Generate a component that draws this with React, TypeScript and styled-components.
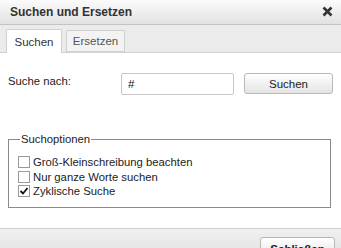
import React from "react";
import styled, { createGlobalStyle } from "styled-components";

const Global = createGlobalStyle`
  html, body { margin: 0; padding: 0; background: #fff; }
  body { font-family: "Liberation Sans", Arial, sans-serif; }
  * { box-sizing: border-box; }
`;

const Dialog = styled.div`
  width: 341px;
  height: 248px;
  overflow: hidden;
  display: flex;
  flex-direction: column;
  background: #fff;
  font-family: "Liberation Sans", Arial, sans-serif;
  font-size: 11.3px;
  color: #222;
`;

const TitleBar = styled.div`
  height: 25px;
  flex: none;
  display: flex;
  align-items: center;
  justify-content: space-between;
  padding: 0 8px 1px 10px;
  background: linear-gradient(#fbfbfb, #e2e2e2);
  border-bottom: 1px solid #c4c4c4;
`;

const Title = styled.span`
  font-weight: bold;
  font-size: 12px;
  color: #333;
`;

const Close = styled.svg`
  width: 11px;
  height: 11px;
`;

const TabBar = styled.div`
  height: 28px;
  flex: none;
  display: flex;
  align-items: flex-end;
  gap: 4px;
  padding-left: 6px;
  background: #ebebeb;
  border-bottom: 1px solid #d2d2d2;
`;

const Tab = styled.div<{ $active?: boolean }>`
  width: ${(p) => (p.$active ? "56px" : "59px")};
  height: ${(p) => (p.$active ? "24px" : "22px")};
  margin-bottom: ${(p) => (p.$active ? "-1px" : "0")};
  display: flex;
  align-items: center;
  justify-content: center;
  font-size: 11.5px;
  color: ${(p) => (p.$active ? "#333" : "#555")};
  background: ${(p) => (p.$active ? "#fff" : "#f3f3f3")};
  border: 1px solid #cfcfcf;
  border-bottom: ${(p) => (p.$active ? "none" : "1px solid #d2d2d2")};
  border-radius: 2px 2px 0 0;
`;

const Content = styled.div`
  flex: 1;
  padding: 20px 8px 0 8px;
  display: flex;
  flex-direction: column;
`;

const SearchRow = styled.div`
  display: flex;
  align-items: flex-start;
  height: 22px;
`;

const Label = styled.span`
  width: 113px;
  padding-top: 2px;
  color: #222;
`;

const Input = styled.div`
  width: 113px;
  height: 22px;
  border: 1px solid #c8c8c8;
  border-radius: 2px;
  padding: 4px 6px;
  font-size: 11.5px;
  color: #111;
  background: #fff;
`;

const Button = styled.div<{ $bold?: boolean }>`
  height: 21px;
  display: flex;
  align-items: center;
  justify-content: center;
  border: 1px solid #b8b8b8;
  border-radius: 3px;
  background: linear-gradient(#ffffff, #e4e4e4);
  font-size: 11.5px;
  font-weight: ${(p) => (p.$bold ? "bold" : "normal")};
  color: #222;
`;

const SearchButton = styled(Button)`
  width: 89px;
  margin-left: 10px;
`;

const Fieldset = styled.fieldset`
  margin: 38px 2px 0 0;
  padding: 10px 0 4px 9px;
  border: 1px solid #8a8a8a;
  height: 75px;
`;

const Legend = styled.legend`
  padding: 0 1px;
  margin-left: 2px;
  color: #222;
  line-height: 12px;
`;

const Options = styled.div`
  display: flex;
  flex-direction: column;
`;

const Option = styled.label`
  display: flex;
  align-items: center;
  gap: 3px;
  height: 14.5px;
  color: #222;
`;

const Box = styled.span`
  width: 12px;
  height: 12px;
  border: 1px solid #9a9a9a;
  background: #fff;
  display: flex;
  align-items: center;
  justify-content: center;
`;

const Footer = styled.div`
  height: 20px;
  flex: none;
  display: flex;
  justify-content: flex-end;
  align-items: flex-start;
  padding: 8px 6px 0 0;
  background: linear-gradient(#f0f0f0, #e6e6e6);
  border-top: 1px solid #cfcfcf;
`;

const CloseButton = styled(Button)`
  width: 75px;
  height: 22px;
  align-items: flex-start;
  padding-top: 5px;
`;

function Checkbox({ checked }: { checked?: boolean }) {
  return (
    <Box>
      {checked && (
        <svg width="10" height="10" viewBox="0 0 10 10">
          <path d="M1.5 5 L4 7.5 L8.5 2" fill="none" stroke="#111" strokeWidth="1.8" />
        </svg>
      )}
    </Box>
  );
}

export default function App() {
  return (
    <>
      <Global />
      <Dialog>
        <TitleBar>
          <Title>Suchen und Ersetzen</Title>
          <Close viewBox="0 0 11 11">
            <path d="M1.5 1.5 L9.5 9.5 M9.5 1.5 L1.5 9.5" stroke="#333" strokeWidth="2.6" />
          </Close>
        </TitleBar>
        <TabBar>
          <Tab $active>Suchen</Tab>
          <Tab>Ersetzen</Tab>
        </TabBar>
        <Content>
          <SearchRow>
            <Label>Suche nach:</Label>
            <Input>#</Input>
            <SearchButton>Suchen</SearchButton>
          </SearchRow>
          <Fieldset>
            <Legend>Suchoptionen</Legend>
            <Options>
              <Option>
                <Checkbox />
                Groß-Kleinschreibung beachten
              </Option>
              <Option>
                <Checkbox />
                Nur ganze Worte suchen
              </Option>
              <Option>
                <Checkbox checked />
                Zyklische Suche
              </Option>
            </Options>
          </Fieldset>
        </Content>
        <Footer>
          <CloseButton $bold>Schließen</CloseButton>
        </Footer>
      </Dialog>
    </>
  );
}
